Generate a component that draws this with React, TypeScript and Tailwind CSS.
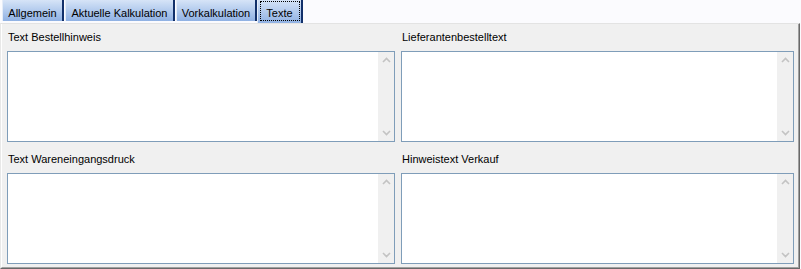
import React from "react";

const tabs = [
  { label: "Allgemein", w: "w-[62px]", active: false },
  { label: "Aktuelle Kalkulation", w: "w-[110px]", active: false },
  { label: "Vorkalkulation", w: "w-[81px]", active: false },
  { label: "Texte", w: "w-[46px]", active: true },
];

function Chevron({ up }: { up: boolean }) {
  return (
    <svg width="9" height="6" viewBox="0 0 9 6">
      <path
        d={up ? "M1 5 L4.5 1.5 L8 5" : "M1 1 L4.5 4.5 L8 1"}
        fill="none"
        stroke="#c3c3c3"
        strokeWidth="1.6"
      />
    </svg>
  );
}

function Memo({ label, width }: { label: string; width: string }) {
  return (
    <div className={`flex flex-col ${width}`}>
      <div className="h-[20px] leading-[13px] text-[11px] text-black pl-[1px]">{label}</div>
      <div className="h-[91px] border border-[#7f9db9] bg-white flex justify-end">
        <div className="w-[16px] h-full bg-[#f0f0f0] flex flex-col justify-between">
          <div className="h-[16px] flex items-center justify-center">
            <Chevron up />
          </div>
          <div className="h-[16px] flex items-center justify-center">
            <Chevron up={false} />
          </div>
        </div>
      </div>
    </div>
  );
}

export default function App() {
  return (
    <div
      className="w-[801px] h-[269px] bg-[#fbfbfe] flex flex-col overflow-hidden"
      style={{ fontFamily: '"Liberation Sans", Arial, sans-serif' }}
    >
      <div className="h-[23px] flex items-start pl-[2px] gap-[1px]">
        {tabs.map((t) => (
          <div
            key={t.label}
            className={`${t.w} ${
              t.active ? "h-[23px] -ml-[1px]" : "h-[21px]"
            } bg-gradient-to-b from-[#d6e4f7] to-[#90b1e3] border-l border-l-[#e4ecf8] border-r-2 border-r-[#12306a] flex justify-center text-[11px] leading-[13px] text-black`}
          >
            {t.active ? (
              <div className="mt-[1px] h-[20px] w-[40px] border border-dotted border-black flex justify-center pt-[5px]">
                {t.label}
              </div>
            ) : (
              <div className="pt-[7px]">{t.label}</div>
            )}
          </div>
        ))}
      </div>
      <div className="flex-1 border-t border-l border-t-[#e3e3e3] border-l-[#e8e8e8] border-r border-b border-r-[#696969] border-b-[#696969] mr-[1px]">
        <div className="h-full border-l border-l-white border-r border-b border-r-[#a0a0a0] border-b-[#a0a0a0] bg-[#f0f0f0] pl-[5px] pt-[7px]">
          <div className="flex flex-col gap-y-[11px]">
            <div className="flex gap-x-[6px]">
              <Memo label="Text Bestellhinweis" width="w-[388px]" />
              <Memo label="Lieferantenbestelltext" width="w-[393px]" />
            </div>
            <div className="flex gap-x-[6px]">
              <Memo label="Text Wareneingangsdruck" width="w-[388px]" />
              <Memo label="Hinweistext Verkauf" width="w-[393px]" />
            </div>
          </div>
        </div>
      </div>
    </div>
  );
}
